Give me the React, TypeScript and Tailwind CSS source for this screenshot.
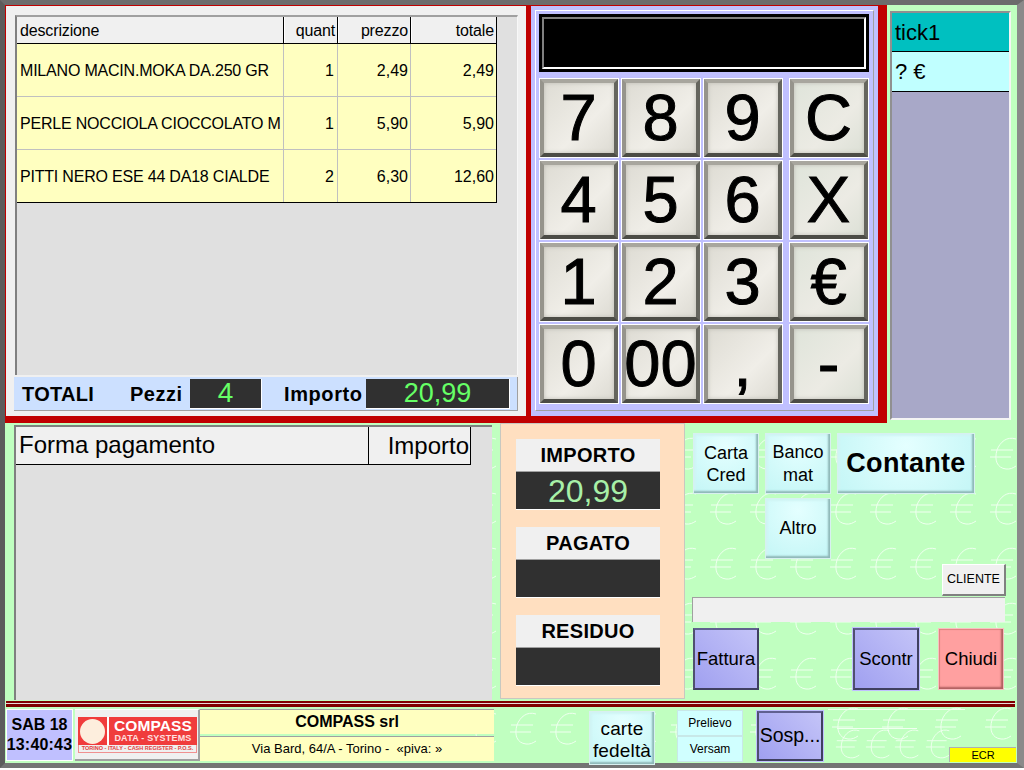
import React from "react";

const font = "[font-family:'Liberation_Sans',Arial,sans-serif]";

function Euro({ x, y, s = 1 }: { x: number; y: number; s?: number }) {
  return (
    <g transform={`translate(${x} ${y}) scale(${s})`} fill="none" stroke="#f0fff0" strokeWidth="1">
      <path d="M27 2 C18 -1 11 5 8 13 C5 23 8 31 17 32 C21 32.500 24 31 27 29" />
      <path d="M2 13 H24 M1 20 H22" />
    </g>
  );
}

function EuroBg() {
  const cells: React.ReactElement[] = [];
  for (let r = 0; r < 6; r++) {
    for (let c = 0; c < 14; c++) {
      const cx = 1003 - 40 * c;
      const cy = 453 + 55 * r;
      if (r === 5 && cx > 830) continue;
      cells.push(<Euro key={r + "-" + c} x={cx - 14} y={cy - 16} />);
    }
  }
  [845, 895, 948, 998].forEach((cx) => cells.push(<Euro key={"a" + cx} x={cx - 14} y={707} />));
  [848, 878, 907, 938].forEach((cx) => cells.push(<Euro key={"b" + cx} x={cx - 13} y={729} s={0.9} />));
  return (
    <svg className="absolute left-0 top-0" width="1024" height="770" aria-hidden="true">
      {cells}
      <path d="M828 709.500 H965 M837 728.500 H917" stroke="#f0fff0" strokeWidth="1" />
    </svg>
  );
}

const keyBevel =
  "border-[5px] border-t-[#a8a69e] border-l-[#96948c] border-r-[#65655e] border-b-[#4c4c46] outline outline-1 -outline-offset-1 outline-white shadow-[inset_0_0_4px_#bdbbb3] [-webkit-text-stroke:1px_black]";

function Key({ t, side }: { t: string; side?: boolean }) {
  return (
    <button
      className={`h-[80px] w-[80px] flex items-center justify-center text-black text-[65px] leading-none pr-[1px] pb-[1px] ${keyBevel} ${
        side ? "bg-[linear-gradient(135deg,#dfe4da,#ecebe4_60%,#dce0d6)]" : "bg-[linear-gradient(135deg,#dedcd4,#f0eee8_60%,#dddbd3)]"
      }`}
    >
      {t}
    </button>
  );
}

function KeyRow({ a, b, c, d }: { a: string; b: string; c: string; d: string }) {
  return (
    <div className="flex">
      <div className="flex gap-[2px]">
        <Key t={a} />
        <Key t={b} />
        <Key t={c} />
      </div>
      <div className="ml-[6px]">
        <Key t={d} side />
      </div>
    </div>
  );
}

const cyanBtn =
  "flex items-center justify-center text-center border border-[#d8f0f0] bg-[radial-gradient(circle_at_50%_20%,#e4ffff,#c4f6f6)] shadow-[inset_-2px_-2px_2px_#8fb8b8,inset_2px_2px_2px_#d0f4f4] text-black";

const blueBtn =
  "flex items-center justify-center text-black bg-[linear-gradient(45deg,#a0a0f0,#c4c4f8)] border-2 border-t-[#606090] border-l-[#505070] border-r-[#404060] border-b-[#404060]";

function Row({ d, q, p, t }: { d: string; q: string; p: string; t: string }) {
  return (
    <div className="flex h-[53px] last:h-[52px] items-stretch border-b border-[#c0c0c0] last:border-b-0 bg-[#ffffc0] text-[16px] text-black">
      <div className="w-[267px] flex items-center pl-[3px] pt-[2px] border-r border-[#c0c0c0] whitespace-nowrap tracking-[-0.2px]">{d}</div>
      <div className="w-[54px] flex items-center justify-end pr-[3px] pt-[2px] border-r border-[#c0c0c0]">{q}</div>
      <div className="w-[73px] flex items-center justify-end pr-[2px] pt-[2px] border-r border-[#c0c0c0]">{p}</div>
      <div className="flex-1 flex items-center justify-end pr-[2px] pt-[2px]">{t}</div>
    </div>
  );
}

function Head({ w, t, right }: { w: string; t: string; right?: boolean }) {
  return (
    <div className={`${w} h-full flex items-center pt-[2px] tracking-[-0.15px] border-r border-black last:border-r-0 ${right ? "justify-end pr-[2px] border-l border-l-white" : "pl-[3px]"}`}>{t}</div>
  );
}

function Amount({ label, value }: { label: string; value?: string }) {
  return (
    <div className="w-[144px] flex flex-col">
      <div className="h-[33px] bg-[#f0f0f0] border-b border-[#a0a0a0] flex items-center justify-center text-[20px] font-bold tracking-[0.3px] text-black">{label}</div>
      <div className="h-[38px] bg-[#303030] border-b border-white flex items-center justify-center text-[32px] text-[#a8f0a8]">{value}</div>
    </div>
  );
}

export default function App() {
  return (
    <div className={`relative w-[1024px] h-[770px] overflow-hidden bg-white ${font}`}>
      <div className="absolute left-0 top-0 w-[1024px] h-[768px] bg-[#c0ffc0]" />
      <EuroBg />
      <div className="relative flex flex-col h-[768px] border-t-[5px] border-l-[5px] border-r-[7px] border-b-[5px] border-t-[#6c6c6c] border-l-[#5c5c5c] border-r-[#8a8a8a] border-b-[#747474]">
        {/* top */}
        <div className="flex h-[418px] shrink-0">
          <div className="w-[882px] h-full flex bg-[#c00000] pt-[1px] pl-[1px] pb-[7px] pr-[8px]">
            {/* sale list */}
            <div className="w-[520px] flex flex-col bg-[#f0f0f0] pl-[8px] pt-[9px] pb-[5px]">
              <div className="ml-[1px] w-[503px] h-[360px] shrink-0 bg-[#e0e0e0] border-t-2 border-l-2 border-t-[#a0a0a0] border-l-[#808080] border-r border-r-[#f8f8f8]">
                <div className="w-[480px] border-b border-r border-black">
                  <div className="flex h-[27px] bg-[#f0f0f0] border-b border-black text-[16px] text-black">
                    <Head w="w-[267px]" t="descrizione" />
                    <Head w="w-[54px]" t="quant" right />
                    <Head w="w-[73px]" t="prezzo" right />
                    <Head w="flex-1" t="totale" right />
                  </div>
                  <Row d="MILANO MACIN.MOKA DA.250 GR" q="1" p="2,49" t="2,49" />
                  <Row d="PERLE NOCCIOLA CIOCCOLATO M" q="1" p="5,90" t="5,90" />
                  <Row d="PITTI NERO ESE 44 DA18 CIALDE" q="2" p="6,30" t="12,60" />
                </div>
              </div>
              <div className="mt-[2px] w-[504px] h-[34px] bg-[#cce0ff] border-b border-r border-[#a0a0a0] flex items-center text-black font-bold text-[20px]">
                <span className="ml-[8px] w-[108px] tracking-[0.3px]">TOTALI</span>
                <span className="w-[60px] tracking-[0.5px]">Pezzi</span>
                <div className="w-[72px] h-[30px] bg-[#303030] border-r border-b border-white flex items-center justify-center text-[#66ff66] font-normal text-[28px]">4</div>
                <span className="ml-[22px] w-[82px] tracking-[0.6px]">Importo</span>
                <div className="w-[144px] h-[30px] bg-[#303030] border-r border-b border-white flex items-center justify-center text-[#66ff66] font-normal text-[27px]">20,99</div>
              </div>
            </div>
            {/* keypad */}
            <div className="ml-[5px] w-[347px] bg-[#c0c0ff] pl-[4px] pt-[4px] pr-[4px]">
              <div className="h-[401px] border-t border-l border-white border-r border-r-[#a0a0a0] border-b border-b-[#a0a0a0] pl-[3px] pt-[3px]">
                <div className="w-[330px] h-[58px] bg-black p-[3px]">
                  <div className="h-full border-2 border-t-[#808080] border-l-[#808080] border-r-white border-b-white bg-black" />
                </div>
                <div className="mt-[6px] flex flex-col gap-[2px]">
                  <KeyRow a="7" b="8" c="9" d="C" />
                  <KeyRow a="4" b="5" c="6" d="X" />
                  <KeyRow a="1" b="2" c="3" d="€" />
                  <KeyRow a="0" b="00" c="," d="-" />
                </div>
              </div>
            </div>
          </div>
          {/* tickets */}
          <div className="ml-[3px] mt-[6px] w-[121px] h-[409px] border-2 border-[#909090] border-r-[#f4f4f4] border-b-[#f4f4f4] bg-[#a8a8c8] text-[22px] text-black">
            <div className="h-[39px] bg-[#00c0c0] border-b border-black flex items-center pl-[3px]">tick1</div>
            <div className="h-[40px] bg-[#c0ffff] border-b border-black flex items-center pl-[3px]">? €</div>
          </div>
        </div>

        {/* middle */}
        <div className="flex h-[278px] shrink-0">
          <div className="ml-[9px] mt-[2px] w-[478px] h-[275px] bg-[#e0e0e0] border-t-2 border-l-2 border-t-[#808080] border-l-[#808080]">
            <div className="w-[455px] h-[38px] flex bg-[#f0f0f0] border-b border-r border-black text-[24px] text-black pb-[2px]">
              <div className="w-[352px] h-full flex items-center pl-[3px]">Forma pagamento</div>
              <div className="flex-1 h-[37px] flex items-center justify-end pr-[1px] border-l border-black">Importo</div>
            </div>
          </div>
          <div className="ml-[8px] w-[185px] h-[276px] bg-[#ffdfc0] border border-[#c8c8c0] pl-[15px] pt-[15px] flex flex-col gap-[17px]">
            <Amount label="IMPORTO" value="20,99" />
            <Amount label="PAGATO" />
            <Amount label="RESIDUO" />
          </div>
          <div className="ml-[8px] flex-1 flex flex-col pt-[10px]">
            <div className="flex gap-[6px]">
              <button className={`${cyanBtn} w-[66px] h-[61px] text-[18px] leading-[22px]`}>Carta<br />Cred</button>
              <button className={`${cyanBtn} w-[66px] h-[61px] text-[18px] leading-[23px]`}>Banco<br />mat</button>
              <button className={`${cyanBtn} w-[138px] h-[61px] text-[27px] font-bold tracking-[0.3px]`}>Contante</button>
            </div>
            <button className={`${cyanBtn} ml-[72px] mt-[4px] w-[66px] h-[61px] text-[18px]`}>Altro</button>
            <div className="flex justify-end pr-[11px] mt-[5px]">
              <button className="w-[64px] h-[32px] bg-[#f0f0f0] border border-white border-r-2 border-b-2 border-r-[#808080] border-b-[#808080] flex items-center justify-center text-[12.500px] text-black">CLIENTE</button>
            </div>
            <div className="ml-[-1px] mt-[1px] w-[313px] h-[25px] bg-[#f0f0f0] border-t border-l border-[#a0a0a0]" />
            <div className="flex mt-[6px]">
              <button className={`${blueBtn} w-[66px] h-[62px] text-[18.500px]`}>Fattura</button>
              <button className={`${blueBtn} ml-[94px] w-[66px] h-[62px] text-[18.500px] outline outline-1 outline-[#c0c0ff]`}>Scontr</button>
              <button className="ml-[19px] w-[66px] h-[62px] flex items-center justify-center text-[18.500px] text-black bg-[#ffa0a0] border border-[#f8c0c0] shadow-[inset_-2px_-2px_2px_#b06060,inset_1px_1px_1px_#e08080]">Chiudi</button>
            </div>
          </div>
        </div>

        {/* dark-red rule */}
        <div className="ml-[1px] mr-[2px] h-[6px] shrink-0 bg-[#e8d8d8] border-t-[2px] border-b-[3px] border-t-[#800000] border-b-[#800000]" />

        {/* bottom */}
        <div className="flex flex-1 pt-[2px]">
          <div className="ml-[1px] w-[67px] h-[52px] bg-[#c0c0ff] border border-white flex flex-col items-center justify-center text-[16px] font-bold leading-[20px] text-black">
            <span>SAB 18</span>
            <span className="tracking-[0.2px]">13:40:43</span>
          </div>
          <div className="ml-[2px] w-[125px] h-[52px] bg-[#f0f0f0] border-t border-r-2 border-b-2 border-t-white border-r-[#a0a0a0] border-b-[#a0a0a0] pl-[3px] pt-[7px]">
            <div className="w-[119px] h-[28px] bg-[#f03c3c] flex items-center">
              <div className="w-[31px] h-full shrink-0 flex items-center justify-center border-r-2 border-white">
                <div className="w-[25px] h-[25px] rounded-full bg-[#fdeedd]" />
              </div>
              <div className="flex-1 flex flex-col items-center text-white font-bold">
                <div className="text-[15.500px] leading-[14px] tracking-[0.1px]">COMPASS</div>
                <div className="text-[9px] leading-[9px] tracking-[0.2px] text-[#ffe0e0] mt-[1px]">DATA - SYSTEMS</div>
              </div>
            </div>
            <div className="w-[119px] h-[8px] flex items-center justify-center border border-[#f09090] border-t-0 text-[5.500px] leading-none text-[#e04040] font-bold whitespace-nowrap">TORINO - ITALY - CASH REGISTER - P.O.S.</div>
          </div>
          <div className="w-[294px] h-[52px] flex flex-col gap-[2px]">
            <div className="h-[25px] bg-[#ffffc0] border-t border-[#a0a0a0] flex items-center justify-center text-[16px] font-bold text-black">COMPASS srl</div>
            <div className="h-[25px] bg-[#ffffc0] border-t border-[#a0a0a0] flex items-center justify-center text-[13px] text-black whitespace-pre">Via Bard, 64/A - Torino -  «piva: »</div>
          </div>
          <button className={`${cyanBtn} ml-[95px] mt-[2px] pt-[4px] w-[66px] h-[54px] text-[19px] leading-[22px] tracking-[0.15px]`}>carte<br />fedeltà</button>
          <div className="ml-[22px] mt-[1px] w-[66px] h-[52px] flex flex-col">
            <button className="h-[26px] flex items-center justify-center text-[12px] text-black bg-[#d0ffff] border border-[#c8e8e8]">Prelievo</button>
            <button className="h-[26px] flex items-center justify-center text-[12px] text-black bg-[#d0ffff] border border-[#c8e8e8]">Versam</button>
          </div>
          <button className={`${blueBtn} ml-[14px] mt-[2px] w-[66px] h-[50px] text-[19.500px] outline outline-1 outline-[#c0c0ff]`}>Sosp...</button>
          <div className="ml-[126px] mt-[38px] w-[67px] h-[15px] bg-[#ffff00] border-t border-l border-[#b0b0b0] flex items-center justify-center text-[11px] text-black">ECR</div>
        </div>
      </div>
    </div>
  );
}
